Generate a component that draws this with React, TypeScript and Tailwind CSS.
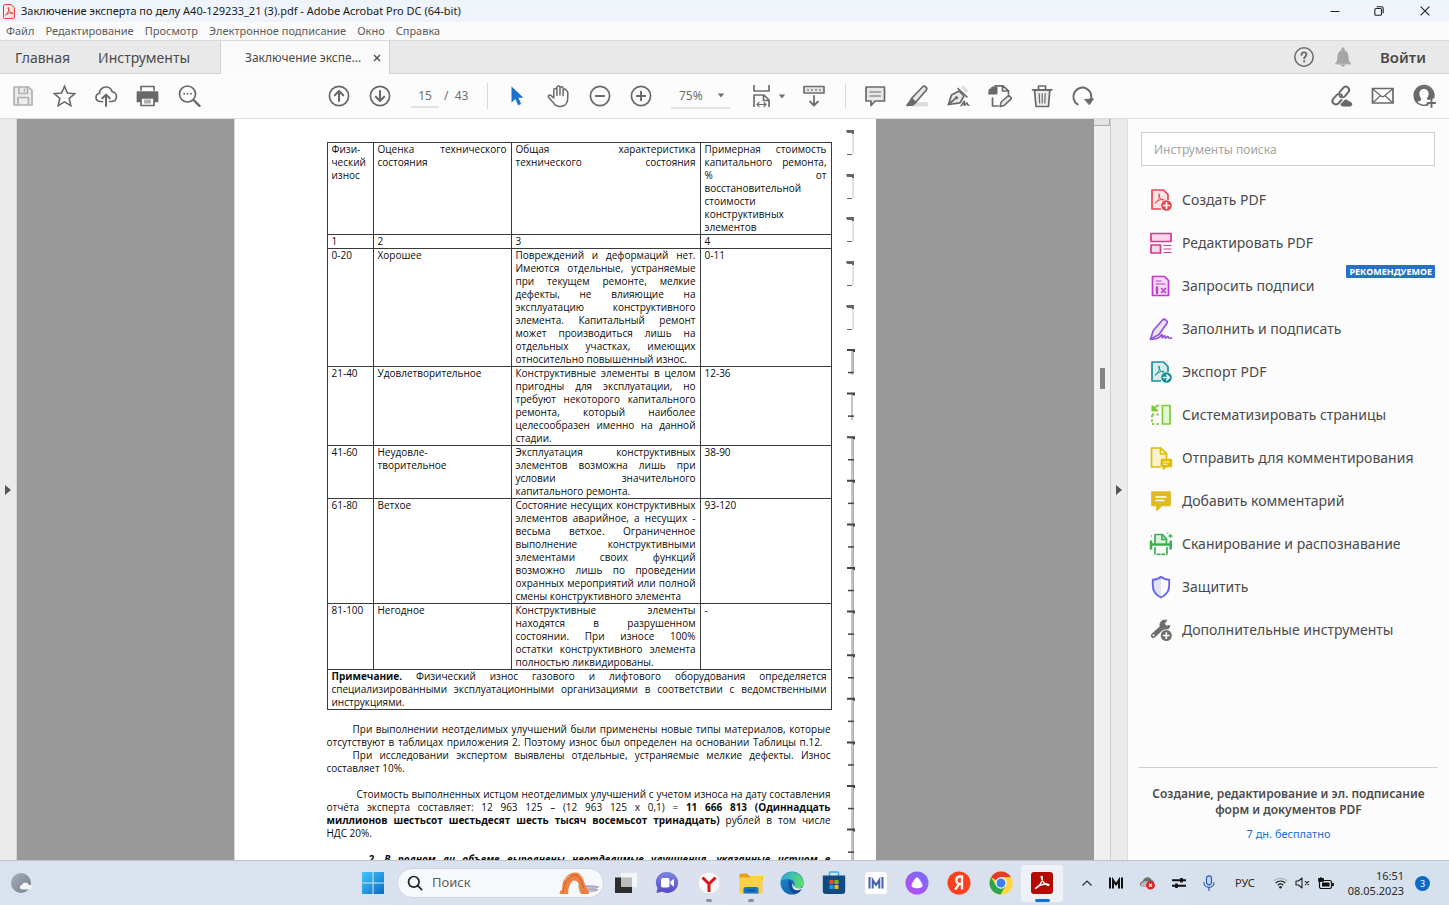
import React from "react";

type Kids = { children: React.ReactNode };

/* ---------- shared helpers ---------- */

function Glyph({ children, size = "size-6" }: Kids & { size?: string }) {
  return (
    <svg
      viewBox="0 0 24 24"
      className={size + " shrink-0"}
      fill="none"
      stroke="currentColor"
      strokeWidth="1.7"
      strokeLinecap="round"
      strokeLinejoin="round"
      aria-hidden="true"
    >
      {children}
    </svg>
  );
}

function Tool({ label, children }: Kids & { label: string }) {
  return (
    <button type="button" aria-label={label} className="flex h-9 flex-1 items-center justify-center text-[#696969]">
      {children}
    </button>
  );
}

function Caret() {
  return (
    <svg viewBox="0 0 8 5" className="h-[5px] w-2 shrink-0" fill="#6e6e6e" aria-hidden="true">
      <path d="M0.8 0.5h6.4L4 4.6z" />
    </svg>
  );
}

/* ---------- window header ---------- */

function TitleBar() {
  return (
    <header className="flex h-[22px] shrink-0 items-center bg-[#eff3fa] pl-[3px] text-[#1b1b1b]">
      <svg viewBox="0 0 12 15" className="h-[15px] w-3" fill="none" aria-hidden="true">
        <path d="M1.5.6h6.8L11.4 3.6v9.8a1 1 0 0 1-1 1H1.5a1 1 0 0 1-1-1V1.6a1 1 0 0 1 1-1z" fill="#fde7e7" stroke="#e5322d" />
        <path d="M2.5 11.2C4.5 9.8 6 6.8 5.8 4.2c-.1-1-.8-.8-.6.2.4 2.5 2.2 4.8 4.4 5.2.7 0 .5-.9-.4-.9-2.2 0-5.2.9-6.7 2.5z" stroke="#e5322d" strokeWidth=".9" />
      </svg>
      <h1 className="ml-[6px] text-[11px] leading-4">Заключение эксперта по делу А40-129233_21 (3).pdf - Adobe Acrobat Pro DC (64-bit)</h1>
      <div className="ml-auto flex h-full">
        <button type="button" aria-label="Свернуть" className="flex w-11 items-center justify-center">
          <svg viewBox="0 0 10 10" className="size-[10px]" stroke="#222" aria-hidden="true"><path d="M.5 5.5h9" /></svg>
        </button>
        <button type="button" aria-label="Восстановить" className="flex w-11 items-center justify-center">
          <svg viewBox="0 0 10 10" className="size-[10px]" fill="none" stroke="#222" strokeWidth="1.1" aria-hidden="true">
            <rect x=".8" y="2.5" width="6.7" height="6.7" rx="1.3" />
            <path d="M2.7 .8h4.8a1.7 1.7 0 0 1 1.7 1.7v4.8" />
          </svg>
        </button>
        <button type="button" aria-label="Закрыть" className="flex w-12 items-center justify-center">
          <svg viewBox="0 0 10 10" className="size-[10px]" stroke="#222" strokeWidth="1.1" aria-hidden="true"><path d="M.6.6l8.8 8.8M9.4.6L.6 9.4" /></svg>
        </button>
      </div>
    </header>
  );
}

const MENUS = ["Файл", "Редактирование", "Просмотр", "Электронное подписание", "Окно", "Справка"];

function MenuBar() {
  return (
    <nav className="flex h-[19px] shrink-0 items-center gap-[11px] border-b border-[#d9d9d9] bg-[#fafafa] pl-[6px] text-[11px] leading-4 text-[#5c5c5c]">
      {MENUS.map((m) => (
        <button type="button" key={m}>{m}</button>
      ))}
    </nav>
  );
}

function TabBar() {
  return (
    <div className="flex h-[33px] shrink-0 bg-[#e9e9e9] text-[#4b4b4b]">
      <div className="flex w-[221px] items-center gap-7 border-r border-b border-[#d2d2d2] pl-[15px] text-[14px]">
        <button type="button">Главная</button>
        <button type="button">Инструменты</button>
      </div>
      <div className="flex w-[169px] items-center border-r border-[#d2d2d2] bg-[#fafafa] pl-6 text-[12px]">
        <button type="button">Заключение экспе...</button>
        <button type="button" aria-label="Закрыть вкладку" className="ml-auto mr-[8px]">
          <svg viewBox="0 0 8 8" className="size-2" stroke="#555" strokeWidth="1.5" aria-hidden="true"><path d="M1 1l6 6M7 1L1 7" /></svg>
        </button>
      </div>
      <div className="flex flex-1 items-center justify-end border-b border-[#d2d2d2] pr-[23px] text-[#6e6e6e]">
        <button type="button" aria-label="Справка">
          <Glyph size="size-[22px]">
            <circle cx="12" cy="12" r="10" />
            <path d="M9.3 9.7c0-1.8 1.2-2.7 2.7-2.7s2.7.9 2.7 2.4c0 2-2.5 2.1-2.5 4.1" strokeWidth="2" />
            <path d="M12.2 16.8v.1" strokeWidth="2.4" />
          </Glyph>
        </button>
        <button type="button" aria-label="Уведомления" className="ml-[17px] text-[#a6a6a6]">
          <Glyph size="size-[22px]">
            <path d="M3.8 19.3c1.8-1.7 2.7-4 2.7-8 0-3.5 1.9-5.8 4.2-6.3V3.2c0-1.600 2.600-1.600 2.600 0V5c2.300.5 4.200 2.800 4.200 6.300 0 4 .9 6.300 2.700 8z" fill="currentColor" strokeWidth="1" />
            <path d="M10 20.800h4c-.3 1.600-3.700 1.600-4 0z" fill="currentColor" strokeWidth="1" />
          </Glyph>
        </button>
        <button type="button" className="ml-[26px] text-[15px] font-semibold text-[#4b4b4b]">Войти</button>
      </div>
    </div>
  );
}

/* ---------- toolbar ---------- */

function Toolbar() {
  return (
    <div className="flex h-[45px] shrink-0 items-center border-b border-[#dcdcdc] bg-[#fcfcfc] pr-1 pl-[2px] text-[#6e6e6e]">
      <div className="flex w-[208px]">
        <Tool label="Сохранить">
          <span className="text-[#b1b1b1]">
            <Glyph>
              <path d="M3 3h14.5L21 6.500V21H3z" fill="#ececec" />
              <path d="M8 3v6.500h8.500V3M7 21v-7.500h10.500V21M13.500 5v2" />
            </Glyph>
          </span>
        </Tool>
        <Tool label="Избранное">
          <Glyph>
            <path d="M12.500 2.300l2.900 6.700 7.300.7-5.500 4.800 1.600 7.200-6.300-3.800-6.300 3.800 1.600-7.200-5.500-4.800 7.300-.7z" strokeLinejoin="miter" strokeWidth="1.600" />
          </Glyph>
        </Tool>
        <Tool label="Отправить в облако">
          <Glyph>
            <path d="M8.500 17.500H6.300C3.700 17.500 2 15.700 2 13.500c0-2.100 1.400-3.700 3.400-4C5.500 5.700 8.300 3 11.800 3c3.100 0 5.700 2 6.400 4.900 2.300.2 4.300 2.200 4.300 4.700 0 2.800-2 4.900-4.700 4.900h-2.300" />
            <path d="M12 22V11M8.300 14.300L12 10.600l3.700 3.700" strokeWidth="2" />
          </Glyph>
        </Tool>
        <Tool label="Печать">
          <Glyph>
            <path d="M5 6V2.500h13V6" />
            <path d="M1.500 8h20v9.500H18V14H5v3.500H1.500z" fill="currentColor" />
            <path d="M5 14h13v7.500H5z" fill="#fcfcfc" />
            <path d="M8 15.500h7v4H8z" fill="#b0b0b0" stroke="none" />
          </Glyph>
        </Tool>
        <Tool label="Найти">
          <Glyph>
            <circle cx="10.500" cy="10" r="8" />
            <path d="M16.500 16l6 5.800" strokeWidth="2.400" />
            <path d="M7.200 9.700v.1M10.600 9.700v.1M14 9.700v.1" strokeWidth="1.900" />
          </Glyph>
        </Tool>
      </div>
      <div className="min-w-2 flex-1" />
      <div className="flex w-[786px] items-center">
        <div className="flex w-[83px]">
          <Tool label="Предыдущая страница">
            <Glyph>
              <circle cx="12" cy="12" r="9.600" />
              <path d="M12 17V7.500M7.800 11.300L12 7.100l4.200 4.200" strokeWidth="2.100" />
            </Glyph>
          </Tool>
          <Tool label="Следующая страница">
            <Glyph>
              <circle cx="12" cy="12" r="9.600" />
              <path d="M12 7v9.500M7.800 12.700l4.200 4.200 4.200-4.200" strokeWidth="2.100" />
            </Glyph>
          </Tool>
        </div>
        <input
          aria-label="Номер страницы"
          defaultValue="15"
          className="ml-[10px] h-6 w-[28px] border-b-2 border-[#e3e3e3] bg-transparent text-center text-[12px]"
        />
        <span className="ml-[5px] w-[43px] text-[12px] whitespace-pre">/  43</span>
        <span className="h-[26px] w-px bg-[#d9d9d9]" />
        <div className="ml-2 flex w-[166px]">
          <Tool label="Выделение">
            <svg viewBox="0 0 14 20" className="h-5 w-[14px]" fill="#1e70cd" aria-hidden="true">
              <path d="M1.500 .5v16l3.900-3.500 2.700 6.300 3-1.300-2.700-6.200h5.100z" />
            </svg>
          </Tool>
          <Tool label="Рука">
            <Glyph>
              <path
                d="M7.800 14V6a1.500 1.500 0 0 1 3.100 0v5.500M10.900 6V3.500a1.500 1.500 0 0 1 3.100 0V11M14 4.200a1.500 1.500 0 0 1 3.100 0v7.300M17.100 6.500a1.500 1.500 0 0 1 3.100 0c.9.2 1.600.9 1.600 2v5.500c0 5-3 8.500-7.800 8.500-3.500 0-5.300-1.300-7-4.300l-4.300-4.600c-1.400-1.800.8-3.300 2.400-2l2.700 2.400"
                strokeWidth="1.500"
              />
            </Glyph>
          </Tool>
          <Tool label="Уменьшить">
            <Glyph><circle cx="12" cy="12" r="9.600" /><path d="M7.800 12h8.400" strokeWidth="2" /></Glyph>
          </Tool>
          <Tool label="Увеличить">
            <Glyph><circle cx="12" cy="12" r="9.600" /><path d="M7.800 12h8.400M12 7.800v8.400" strokeWidth="2" /></Glyph>
          </Tool>
        </div>
        <div className="ml-[9px] flex h-[25px] w-[59px] items-center border-b-2 border-[#e3e3e3] pt-px pr-[5px] pl-2">
          <select aria-label="Масштаб" defaultValue="75%" className="min-w-0 flex-1 appearance-none bg-transparent text-[12px]">
            <option>75%</option>
            <option>100%</option>
          </select>
          <Caret />
        </div>
        <div className="ml-[18px] flex w-[34px] items-center gap-1">
          <button type="button" aria-label="По ширине" className="flex w-[26px] shrink-0 justify-center">
            <Glyph>
              <path d="M5 1v6h15V1M5 23V11h10l5 5v7M14.500 11v5.500h5" strokeLinecap="butt" />
              <path d="M8.500 20.500h8M10 18.500l-2 2 2 2M15 18.500l2 2-2 2" strokeWidth="1.200" />
            </Glyph>
          </button>
          <Caret />
        </div>
        <button type="button" aria-label="Прокрутка" className="ml-[20px] flex w-6 justify-center">
          <Glyph>
            <path d="M2 2.500h20V9H2z" fill="#e6e6e6" />
            <path d="M6 5.800v.1M10 5.800v.1M14 5.800v.1M18 5.800v.1" strokeWidth="1.700" />
            <path d="M12 12v9M8 17.500l4 4 4-4" strokeWidth="1.800" />
          </Glyph>
        </button>
        <span className="ml-[19px] h-[26px] w-px bg-[#d9d9d9]" />
        <div className="ml-2 flex flex-1">
          <Tool label="Комментарий">
            <Glyph>
              <path d="M3 3h18.500v14H12l-4 4.500V17H3z" fill="#e8e8e8" />
              <path d="M7 8h10.500M7 12h10.500" strokeWidth="1.200" />
            </Glyph>
          </Tool>
          <Tool label="Маркер">
            <Glyph>
              <path d="M12 18h11v4.500H7z" fill="#dddddd" stroke="none" />
              <path d="M6.500 14.500l11-11.500c2-2 5.500.8 3.700 3.200L10.500 18.500z" fill="#e8e8e8" />
              <path d="M6.500 15l4 3.600-2.500 2.200L2 21.500z" fill="currentColor" />
            </Glyph>
          </Tool>
          <Tool label="Подпись">
            <Glyph>
              <path d="M14.500 3.500l3-2 5 5-2.500 2.800z" fill="#dddddd" stroke="none" />
              <path d="M2.500 20.500L5.500 11l7.500-4 5 5-4 6.800z" fill="#e8e8e8" />
              <path d="M2.500 20.500l6.800-5.800M12 4.500l9 8.500" />
              <circle cx="10.500" cy="13.700" r="1.200" fill="currentColor" strokeWidth="1" />
              <path d="M15 21.800c1.500-1.500 2.500-5 3.500-4.500s-1.500 4 0 4 1.500-2.500 2.400-2.300-.2 2.300 1.900 2.300" strokeWidth="1.500" />
            </Glyph>
          </Tool>
          <Tool label="Заполнить">
            <Glyph>
              <path d="M1 6.500C1 5 1.500 5 3 5l1-2h5v7H1z" fill="currentColor" strokeWidth="1" />
              <path d="M7 1.800h8l5.500 5v3M14.500 2v5h5.500M4.500 14v8H10" />
              <path d="M12 22.500l1.200-4.500 7.500-6.800 3 3.200-7.500 7z" fill="#e8e8e8" strokeWidth="1.500" />
            </Glyph>
          </Tool>
          <Tool label="Удалить">
            <Glyph>
              <path d="M4.500 6h15.300l-1.300 16.500H6z" fill="#ececec" />
              <path d="M2.500 5.800h19.300M8.500 5.500V2h7v3.500" />
              <path d="M9.200 9.500l.4 9.500M12.200 9.500V19M15.200 9.500l-.4 9.500" strokeWidth="1.200" />
            </Glyph>
          </Tool>
          <Tool label="Повернуть">
            <Glyph>
              <path d="M6.700 20.300A9 9 0 1 1 19.500 16.500" strokeWidth="2" />
              <path d="M14 15.500l8.500-.7-4 5.700z" fill="currentColor" strokeWidth="1" />
            </Glyph>
          </Tool>
        </div>
      </div>
      <div className="min-w-2 flex-[2]" />
      <div className="flex w-[125px]">
        <Tool label="Ссылка">
          <Glyph>
            <g strokeWidth="2">
              <path d="M10.500 8.200l4-4.600c2.800-2.800 7.300 1 5 4.200l-3.500 4.300c-1.500 1.700-4 1.500-5.300 0" />
              <path d="M12.500 16l-3 3.200c-3.300 3-8-.8-5.300-4.300l3.600-4c1.800-1.600 4.200-1 5.200.6" />
            </g>
            <path d="M13.500 22c-2.400-.3-2-3.300.5-3.200.3-3.300 4.800-3.700 5.600-.9 3.200-.6 4.600 3.700 1.800 4.100z" fill="currentColor" strokeWidth="1" />
          </Glyph>
        </Tool>
        <Tool label="Почта">
          <Glyph>
            <path d="M1.500 4.500H22v14.500H1.500z" strokeLinejoin="miter" />
            <path d="M1.500 4.800l8.500 7.200c1 .9 2.300.9 3.300 0l8.500-7.200M2 18.700l7-6.700M21.500 18.700l-7-6.700" strokeWidth="1.200" />
          </Glyph>
        </Tool>
        <Tool label="Поделиться">
          <Glyph>
            <path d="M16 20.500A9.900 9.900 0 1 1 21.600 14" strokeWidth="1.400" />
            <path d="M12 2a10 10 0 0 0-7.500 16.500c1.700-1.300 3.700-1.600 4.500-2.300.4-.5.200-1.700-.2-2.200C6.500 11.500 6.500 5 12 5s5.500 6.500 3.200 9c-.4.500-.5 1.300-.1 1.600l2 .4 4.700-2A10 10 0 0 0 12 2z" fill="currentColor" stroke="none" />
            <path d="M19.500 15v8M15.500 19h8" strokeWidth="1.900" />
          </Glyph>
        </Tool>
      </div>
    </div>
  );
}

/* ---------- scanned document ---------- */

/* One typeset line stretched to the full measure. */
function J({ children, indent = "" }: Kids & { indent?: string }) {
  return <span className={"block text-justify whitespace-nowrap [text-align-last:justify] " + indent}>{children}</span>;
}

/* One typeset line left at its natural width. */
function N({ children }: Kids) {
  return <span className="block whitespace-nowrap">{children}</span>;
}

type Row = { wear: string; state: string[]; text: string[]; cost: string };

const ROWS: Row[] = [
  {
    wear: "0-20",
    state: ["Хорошее"],
    cost: "0-11",
    text: [
      "Повреждений и деформаций нет.",
      "Имеются отдельные, устраняемые",
      "при текущем ремонте, мелкие",
      "дефекты, не влияющие на",
      "эксплуатацию конструктивного",
      "элемента. Капитальный ремонт",
      "может производиться лишь на",
      "отдельных участках, имеющих",
      "относительно повышенный износ.",
    ],
  },
  {
    wear: "21-40",
    state: ["Удовлетворительное"],
    cost: "12-36",
    text: [
      "Конструктивные элементы в целом",
      "пригодны для эксплуатации, но",
      "требуют некоторого капитального",
      "ремонта, который наиболее",
      "целесообразен именно на данной",
      "стадии.",
    ],
  },
  {
    wear: "41-60",
    state: ["Неудовле-", "творительное"],
    cost: "38-90",
    text: ["Эксплуатация конструктивных", "элементов возможна лишь при", "условии значительного", "капитального ремонта."],
  },
  {
    wear: "61-80",
    state: ["Ветхое"],
    cost: "93-120",
    text: [
      "Состояние несущих конструктивных",
      "элементов аварийное, а несущих -",
      "весьма ветхое. Ограниченное",
      "выполнение конструктивными",
      "элементами своих функций",
      "возможно лишь по проведении",
      "охранных мероприятий или полной",
      "смены конструктивного элемента",
    ],
  },
  {
    wear: "81-100",
    state: ["Негодное"],
    cost: "-",
    text: [
      "Конструктивные элементы",
      "находятся в разрушенном",
      "состоянии. При износе 100%",
      "остатки конструктивного элемента",
      "полностью ликвидированы.",
    ],
  },
];

const HOOKS = [11, 55, 98, 142, 186];
const TICKS = Array.from({ length: 24 }, (_, i) => 230 + i * 21.8);

function Binding() {
  return (
    <svg viewBox="0 0 14 742" className="absolute top-0 right-[19px] h-[742px] w-[14px]" fill="none" aria-hidden="true">
      {HOOKS.map((y) => (
        <g key={y}>
          <path d={`M3 ${y}h8v4h-2v-1h-5z`} fill="#666" />
          <path d={`M10 ${y + 4}v20`} stroke="#c2c2c2" />
          <path d={`M4 ${y + 24.5}h5`} stroke="#666" />
        </g>
      ))}
      <path d="M9 232v24M9 275v26M9 318v424" stroke="#c4c4c4" strokeWidth="2" />
      <path d="M10.5 232v22M10.5 318v424" stroke="#8a8a8a" strokeWidth=".7" />
      {TICKS.map((y, i) => (
        <path key={y} d={i % 2 === 0 ? `M4 ${y}h8v3h-2v-1h-6z` : `M5 ${y + 1}h6v1.5h-6z`} fill="#444" />
      ))}
    </svg>
  );
}

const CELL = "border border-[#3a3a3a] px-1 py-0 text-left align-top font-normal";

function DocumentPage() {
  return (
    <article className="relative h-full w-[642px] shrink-0 overflow-hidden border-l border-[#d8d8d8] bg-white pt-[23px] pl-[92px] font-['Open_Sans','Noto_Sans',sans-serif] text-[10px] leading-[13px] text-[#0c0c0c]">
      <table className="w-[504px] table-fixed border-collapse">
        <colgroup>
          <col className="w-[46px]" />
          <col className="w-[138px]" />
          <col className="w-[189px]" />
          <col className="w-[131px]" />
        </colgroup>
        <thead>
          <tr>
            <th className={CELL}><N>Физи-</N><N>ческий</N><N>износ</N></th>
            <th className={CELL}><J>Оценка технического</J><N>состояния</N></th>
            <th className={CELL}><J>Общая характеристика</J><J>технического состояния</J></th>
            <th className={CELL}>
              <J>Примерная стоимость</J>
              <J>капитального ремонта,</J>
              <J>% от</J>
              <N>восстановительной</N>
              <N>стоимости</N>
              <N>конструктивных</N>
              <N>элементов</N>
            </th>
          </tr>
        </thead>
        <tbody>
          <tr>
            <td className={CELL}>1</td>
            <td className={CELL}>2</td>
            <td className={CELL}>3</td>
            <td className={CELL}>4</td>
          </tr>
          {ROWS.map((r) => (
            <tr key={r.wear}>
              <td className={CELL}>{r.wear}</td>
              <td className={CELL}>{r.state.map((s) => <N key={s}>{s}</N>)}</td>
              <td className={CELL}>
                {r.text.map((t, i) => (i === r.text.length - 1 ? <N key={t}>{t}</N> : <J key={t}>{t}</J>))}
              </td>
              <td className={CELL}>{r.cost}</td>
            </tr>
          ))}
          <tr>
            <td colSpan={4} className={CELL}>
              <J><b>Примечание.</b> Физический износ газового и лифтового оборудования определяется</J>
              <J>специализированными эксплуатационными организациями в соответствии с ведомственными</J>
              <N>инструкциями.</N>
            </td>
          </tr>
        </tbody>
      </table>
      <div className="w-[504px] pt-[13px]">
        <p>
          <J indent="pl-[26px]">При выполнении неотделимых улучшений были применены новые типы материалов, которые</J>
          <J indent="pr-[8px]">отсутствуют в таблицах приложения 2. Поэтому износ был определен на основании Таблицы п.12.</J>
        </p>
        <p>
          <J indent="pl-[26px]">При исследовании экспертом выявлены отдельные, устраняемые мелкие дефекты. Износ</J>
          <N>составляет 10%.</N>
        </p>
        <p className="pt-[13px]">
          <J indent="pl-[30px]">Стоимость выполненных истцом неотделимых улучшений с учетом износа на дату составления</J>
          <J>отчёта эксперта составляет: 12 963 125 – (12 963 125 х 0,1) = <b>11 666 813 (Одиннадцать</b></J>
          <J><b>миллионов шестьсот шестьдесят шесть тысяч восемьсот тринадцать)</b> рублей в том числе</J>
          <N>НДС 20%.</N>
        </p>
        <p className="pt-[13px] font-bold italic">
          <J indent="pl-[42px]">2. В полном ли объеме выполнены неотделимые улучшения, указанные истцом в</J>
        </p>
      </div>
      <Binding />
    </article>
  );
}

/* ---------- tools pane ---------- */

function PdfSheet({ tint, children }: Kids & { tint: string }) {
  return (
    <>
      <path d="M12 21H3V2h11.5L19 6.500V12" fill={tint} strokeLinecap="butt" />
      <path d="M6.500 15c2.500-1.500 4.500-5.500 4-8.500-.2-.8-1-.5-.8.300.6 2.700 2.300 5 4.800 5.500.9 0 .7-1-.2-1-2.800-.1-6.500 1.400-7.800 3.700z" strokeWidth="1" />
      <circle cx="17.500" cy="17.500" r="5.300" fill="currentColor" stroke="none" />
      {children}
    </>
  );
}

const TOOLS: { label: string; color: string; icon: React.ReactNode }[] = [
  {
    label: "Создать PDF",
    color: "text-[#e34850]",
    icon: <PdfSheet tint="#fbe3e4"><path d="M17.500 14.800v5.400M14.800 17.500h5.400" stroke="#fff" /></PdfSheet>,
  },
  {
    label: "Редактировать PDF",
    color: "text-[#d83790]",
    icon: (
      <>
        <path d="M2 2.500h20v8H2zM2 14h9.500v8H2z" fill="#f6d9e8" />
        <path d="M15 14.500h7M15 18h7M15 21.500h7" strokeWidth="1.200" />
      </>
    ),
  },
  {
    label: "Запросить подписи",
    color: "text-[#c038cc]",
    icon: (
      <>
        <path d="M3.500 2.500h12l4 4V21.500h-16z" fill="#f5def7" />
        <path d="M7 7h5M7 10h9" strokeWidth="1.200" />
        <path d="M8 13.500v3.500M8 19v.1" strokeWidth="2.400" />
        <path d="M12.500 14.500l4 4M16.500 14.500l-4 4" strokeWidth="1.700" />
      </>
    ),
  },
  {
    label: "Заполнить и подписать",
    color: "text-[#9256d9]",
    icon: (
      <>
        <path d="M1.500 22.200L4.300 13.500 13.500 3c1.900-2 6 1 4.300 3.600L10 17.500z" fill="#ece0f8" />
        <path d="M1.500 22.200c5 .3 8.500-.7 10.500-3.700.9-1.300 1.700-1 1.200.4-.4 1.400 0 2.300 1 1.200.9-1.200 2-1.800 1.900-.3-.1 1.700 1 1.500 1.700.5.7-.9 1.500-.8 1.700.2.1.9 1.500.9 3 .5" />
      </>
    ),
  },
  {
    label: "Экспорт PDF",
    color: "text-[#1b9197]",
    icon: (
      <PdfSheet tint="#d6eced">
        <path d="M14.500 17.500h5.500M17.800 15l2.500 2.500-2.500 2.500" stroke="#fff" strokeWidth="1.500" />
      </PdfSheet>
    ),
  },
  {
    label: "Систематизировать страницы",
    color: "text-[#7dcc36]",
    icon: (
      <>
        <path d="M13.500 2.500H21v18.500h-7.500z" fill="#e6f6d8" />
        <path d="M3 12v9h8.500M3 11.500h7" strokeDasharray="2.200 2.300" strokeLinecap="butt" strokeWidth="2" />
        <path d="M9.500 2.300c-2 .3-4 2-5.500 4.200M3.300 3v4.700h5z" fill="currentColor" />
      </>
    ),
  },
  {
    label: "Отправить для комментирования",
    color: "text-[#dfbf00]",
    icon: (
      <>
        <path d="M11 21H2.500V2h9.300l5.700 5.700V12" fill="#f9f2cc" />
        <path d="M11.500 2v6h6z" fill="#fff" />
        <path d="M12.500 13.500h9.800v7H17l-2.500 2.300v-2.300h-2z" fill="currentColor" />
        <path d="M14.500 16h5.500M14.500 18.300h3.500" stroke="#fff8d0" strokeWidth="1" />
      </>
    ),
  },
  {
    label: "Добавить комментарий",
    color: "text-[#dfba22]",
    icon: (
      <>
        <path d="M3 3h18v13.500h-8.500L8 21v-4.500H3z" fill="currentColor" />
        <path d="M7 8h10M7 11.500h8" stroke="#fff" strokeWidth="1.500" />
      </>
    ),
  },
  {
    label: "Сканирование и распознавание",
    color: "text-[#3dae50]",
    icon: (
      <>
        <path d="M6 11V2.500h7.500L17.500 7v4" fill="#d8efdc" />
        <path d="M13 3v4.500h4" />
        <path d="M2 8.500v9M21.700 8.500v9M2 12.500h20" strokeWidth="2.500" strokeLinecap="butt" />
        <path d="M6 15.500v6.500M18 15.500v6.500M8.500 22.300h2.500M13 22.300h2.500" />
        <path d="M18.800 1v.1M21.500 2.500v3M20 4h3M2.500 4v.1" strokeWidth="1.300" />
      </>
    ),
  },
  {
    label: "Защитить",
    color: "text-[#6767ec]",
    icon: (
      <>
        <path d="M12 2v20.500c-5.500-3-8-6.500-8-12V5c3.500 0 6-1 8-3z" fill="#e1e1fb" stroke="none" />
        <path d="M12 1.800c2 1.800 4.500 2.900 8.200 2.900v5.800c0 5.700-2.700 9.300-8.200 12-5.500-2.700-8.200-6.300-8.200-12V4.700C7.500 4.700 10 3.600 12 1.800z" strokeWidth="1.900" />
      </>
    ),
  },
  {
    label: "Дополнительные инструменты",
    color: "text-[#6e6e6e]",
    icon: (
      <>
        <path d="M4.300 17.500l9.500-8.500" strokeWidth="5" />
        <path d="M17.500 2.200a5 5 0 1 0 3.400 5.300l-3.200.6-2.200-2z" fill="currentColor" strokeWidth="1" />
        <circle cx="4.500" cy="17.300" r="1" fill="#fff" stroke="none" />
        <circle cx="17.300" cy="17.500" r="6.300" fill="#fcfcfc" stroke="none" />
        <circle cx="17.300" cy="17.500" r="5.500" fill="currentColor" stroke="none" />
        <path d="M17.300 14.800v5.400M14.600 17.500H20" stroke="#fff" />
      </>
    ),
  },
];

function ToolsPane() {
  return (
    <aside className="flex w-[322px] shrink-0 flex-col border-l border-[#dcdcdc] bg-[#fcfcfc] pt-[13px]">
      <input
        type="search"
        aria-label="Инструменты поиска"
        placeholder="Инструменты поиска"
        className="mr-[14px] ml-[13px] h-[34px] shrink-0 border border-[#cfcfcf] bg-white px-3 text-[12px] placeholder:text-[#a3a3a3]"
      />
      <ul className="pt-3 pl-[21px]">
        {TOOLS.map((t) => (
          <li key={t.label} className="relative">
            <button type="button" className="flex h-[43px] items-center gap-[9px] text-[14px] whitespace-nowrap text-[#4b4b4b]">
              <span className={t.color}><Glyph>{t.icon}</Glyph></span>
              {t.label}
            </button>
            {t.label === "Запросить подписи" && (
              <span className="absolute top-px right-[14px] h-[13px] rounded-[1px] bg-[#2670c8] px-[3px] text-[9px] leading-[13px] font-bold text-white">
                РЕКОМЕНДУЕМОЕ
              </span>
            )}
          </li>
        ))}
      </ul>
      <div className="mx-[11px] mt-auto border-t border-[#cfcfcf] pt-[18px] pb-[18px] text-center">
        <p className="text-[12px] leading-4 font-semibold text-[#4b4b4b]">
          Создание, редактирование и эл. подписание
          <br />
          форм и документов PDF
        </p>
        <a href="#trial" className="mt-2 block text-[11px] leading-4 text-[#1a6fd0]">7 дн. бесплатно</a>
      </div>
    </aside>
  );
}

function Workspace() {
  return (
    <main className="flex min-h-0 flex-1">
      <button type="button" aria-label="Показать панель навигации" className="flex w-[17px] shrink-0 items-center justify-center border-r border-[#d4d4d4] bg-[#ebebeb]">
        <svg viewBox="0 0 6 10" className="h-[10px] w-[6px]" fill="#555" aria-hidden="true"><path d="M0 0l6 5-6 5z" /></svg>
      </button>
      <section className="flex min-w-0 flex-1 justify-center overflow-hidden bg-[#999999] pr-[2px]">
        <DocumentPage />
      </section>
      <div className="flex w-4 shrink-0 flex-col items-center bg-[#f0f0f0]">
        <span className="h-[7px] w-full border-r border-b border-[#adadad] bg-[#e3e3e3]" />
        <span className="mt-[242px] h-[21px] w-[5px] bg-[#848484]" />
      </div>
      <button type="button" aria-label="Скрыть панель инструментов" className="flex w-[17px] shrink-0 items-center justify-center border-l border-[#cfcfcf] bg-[#ebebeb]">
        <svg viewBox="0 0 6 10" className="h-[10px] w-[6px]" fill="#555" aria-hidden="true"><path d="M0 0l6 5-6 5z" /></svg>
      </button>
      <ToolsPane />
    </main>
  );
}

/* ---------- taskbar ---------- */

function TaskApp({ label, children, state }: Kids & { label: string; state?: "open" | "active" }) {
  return (
    <button
      type="button"
      aria-label={label}
      className={"relative flex h-[37px] flex-1 items-center justify-center " + (state === "active" ? "rounded bg-[#eef2f8]" : "")}
    >
      <svg viewBox="0 0 24 24" className="size-6" fill="none" aria-hidden="true">{children}</svg>
      {state === "open" && <span className="absolute bottom-0 h-[3px] w-[6px] rounded-full bg-[#8a8f97]" />}
      {state === "active" && <span className="absolute bottom-0 h-[3px] w-[15px] rounded-full bg-[#0f73d6]" />}
    </button>
  );
}

function Taskbar() {
  return (
    <footer className="grid h-[45px] shrink-0 grid-cols-[353fr_710px_386fr] items-center border-t border-[#bcc5d2] bg-linear-to-r from-[#dae2f0] via-[#dbe1ee] to-[#d5e1ec] text-[#2b2b2b]">
      <button type="button" aria-label="Погода" className="ml-[10px] w-6">
        <svg viewBox="0 0 24 24" className="size-6" aria-hidden="true">
          <defs><linearGradient id="moon" x1="0" y1="0" x2="1" y2="1"><stop offset="0" stopColor="#a5b0ba" /><stop offset="1" stopColor="#747e88" /></linearGradient></defs>
          <circle cx="11" cy="12" r="10" fill="url(#moon)" />
          <path d="M12.500 18.500c-3.500 0-3.500-4.500-.5-4.500.8-3.300 5.800-3.300 6.500-.3 4.500-.4 4.500 4.800 1 4.800z" fill="#f3f5f7" />
        </svg>
      </button>
      <div className="flex items-center">
        <button type="button" aria-label="Пуск" className="flex w-10 justify-center">
          <svg viewBox="0 0 24 24" className="size-6" aria-hidden="true">
            <defs><linearGradient id="win" x1="0" y1="0" x2="1" y2="1"><stop offset="0" stopColor="#42c8fa" /><stop offset="1" stopColor="#0a6cc4" /></linearGradient></defs>
            <path d="M1 1h10.500v10.500H1zM12.500 1H23v10.500H12.500zM1 12.500h10.500V23H1zM12.500 12.500H23V23H12.500z" fill="url(#win)" />
          </svg>
        </button>
        <label className="ml-1 flex h-[30px] w-[207px] items-center rounded-full border border-[#ced5e0] bg-[#f6f9fc] pr-[2px] pl-[9px]">
          <svg viewBox="0 0 16 16" className="size-4 shrink-0" fill="none" stroke="#222" strokeWidth="1.700" aria-hidden="true">
            <circle cx="6.800" cy="6.800" r="5.300" /><path d="M10.700 10.700l4 4" strokeLinecap="round" />
          </svg>
          <input aria-label="Поиск" placeholder="Поиск" className="ml-[9px] min-w-0 flex-1 bg-transparent text-[13px] placeholder:text-[#5d5d5d]" />
          <svg viewBox="0 0 42 24" className="h-6 w-[42px] shrink-0" aria-hidden="true">
            <path d="M19 14l17 .5 5 1.500-4 1.500 3 1.500-5 2-14 1z" fill="#a9a8c8" />
            <path d="M22 17h15M22 20h14" stroke="#e7c9c4" />
            <path d="M.5 23l.5-3 2-1 .5-6C5.500 6 10 1.500 16.500 1.500c4.500 0 7.500 4 9 10.500l2 5 2 3 .5 3h-8l-1-4c-1-6-2-9.500-5.500-9.500-3 0-4.500 3.500-6 8.500L9 23z" fill="#ee8142" />
            <path d="M4 21c1-9 5-16 11.500-17 5 0 7 6 9 13" stroke="#d2612f" strokeWidth="1.100" fill="none" />
            <path d="M6 9l5-5M20 3l3.500 5" stroke="#f7a76c" strokeWidth="1.300" />
          </svg>
        </label>
        <div className="ml-[1px] flex flex-1">
          <TaskApp label="Представление задач">
            <path d="M1 6.500h17v15.500H1z" fill="#2d2d2d" />
            <path d="M7 2h16v14H7z" fill="#f6f6f6" fillOpacity=".92" />
            <path d="M7 6.500h11V16H7z" fill="#bcbcbc" />
          </TaskApp>
          <TaskApp label="Чат">
            <defs><linearGradient id="chat" x1="0" y1="0" x2="0" y2="1"><stop offset="0" stopColor="#7b86e2" /><stop offset="1" stopColor="#5a49c4" /></linearGradient></defs>
            <path d="M12 1a11 10.500 0 1 1-5 19.800L1.500 22l1-5A10.500 10.500 0 0 1 12 1z" fill="url(#chat)" />
            <rect x="6" y="7" width="8.500" height="9.500" rx="1.800" fill="#fff" />
            <path d="M15.500 10.500l3.500-2.700v8l-3.500-2.700z" fill="#fff" />
          </TaskApp>
          <TaskApp label="Яндекс Браузер" state="open">
            <circle cx="12" cy="12" r="11" fill="#fafafa" stroke="#dcdcdc" />
            <path d="M5.500 6.500L12 13l6.500-6.500M12 13v8" stroke="#d8141c" strokeWidth="3" />
          </TaskApp>
          <TaskApp label="Проводник" state="open">
            <path d="M0.500 4a1.500 1.500 0 0 1 1.500-1.500h6l2.500 2.500H24v5H.5z" fill="#e2a21b" />
            <path d="M.5 6.500H10L12 5h11.500v17.500H.5z" fill="#fbcf47" />
            <path d="M4.500 22.500V18a2 2 0 0 1 2-2h11a2 2 0 0 1 2 2v4.500z" fill="#1674c5" />
            <path d="M8 19.500h8" stroke="#0b4f93" strokeWidth="1.300" />
          </TaskApp>
          <TaskApp label="Microsoft Edge">
            <defs>
              <linearGradient id="edgeTop" x1="0" y1="0" x2="1" y2=".3"><stop offset="0" stopColor="#2aa5de" /><stop offset="1" stopColor="#59dc72" /></linearGradient>
              <linearGradient id="edgeLow" x1="0" y1="0" x2="1" y2="1"><stop offset="0" stopColor="#1b8ed8" /><stop offset="1" stopColor="#10529e" /></linearGradient>
            </defs>
            <circle cx="12" cy="12" r="11.500" fill="url(#edgeLow)" />
            <path d="M.8 10A11.500 11.500 0 0 1 23.500 12c0 4-3 5.700-6 5.700-3 0-4.500-1-3.500-2.200 1.500-2 .5-7-5-7.500-4-.3-7 1-8.200 2z" fill="url(#edgeTop)" />
            <path d="M9.500 8.500C7 12 8.500 20 15 22.800c3-.8 5.500-2.500 7-5.300-6 3.500-12-1-9.500-5z" fill="#123f86" fillOpacity=".65" />
            <path d="M13.500 11.500c-1.500 2.500 1 6 5.500 6 2.500 0 4.500-1.200 5-3l-.7 2c-1.300 2-4.500 3.500-7.800 2.500-3-1-4.500-5-2-7.500z" fill="#e8eff8" />
          </TaskApp>
          <TaskApp label="Microsoft Store">
            <path d="M7.500 5.500V2a1 1 0 0 1 1-1h7a1 1 0 0 1 1 1v3.500" stroke="#35b2ee" strokeWidth="1.500" />
            <path d="M.8 4.500h22.400V20a3 3 0 0 1-3 3H3.800a3 3 0 0 1-3-3z" fill="#114a80" />
            <path d="M7.500 9H11.500v4h-4z" fill="#f25022" /><path d="M12.500 9h4v4h-4z" fill="#7fba00" />
            <path d="M7.500 14h4v4h-4z" fill="#00a4ef" /><path d="M12.500 14h4v4h-4z" fill="#ffb900" />
          </TaskApp>
          <TaskApp label="Mail">
            <rect x="1" y="1" width="22" height="22" rx="3" fill="#fdfdfe" />
            <path d="M5.500 6v11.500M18.500 6v11.500M8.700 17.500V9l3.300 5 3.300-5v8.500" stroke="#4661a8" strokeWidth="2" />
          </TaskApp>
          <TaskApp label="Алиса">
            <defs><linearGradient id="alice" x1="1" y1="0" x2="0" y2="1"><stop offset="0" stopColor="#6f6ff5" /><stop offset="1" stopColor="#c04bf2" /></linearGradient></defs>
            <circle cx="12" cy="12" r="11.500" fill="url(#alice)" />
            <path d="M12 6.200c1.700 0 5.500 6.500 5.500 8.300 0 3.600-11 3.600-11 0 0-1.800 3.800-8.300 5.500-8.300z" fill="#fff" />
          </TaskApp>
          <TaskApp label="Яндекс">
            <circle cx="12" cy="12" r="11.500" fill="#fc3f1d" />
            <path d="M15 18.500V5.500h-2.200c-4.600 0-4.600 7.300 0 7.300H15M12.200 12.800l-4 5.700" stroke="#fff" strokeWidth="2.300" />
          </TaskApp>
          <TaskApp label="Google Chrome">
            <circle cx="12" cy="12" r="11.500" fill="#fdd63c" />
            <path d="M12 12L2 6.300A11.500 11.500 0 0 1 22 6.300H12z" fill="#e33b2e" />
            <path d="M2 6.300A11.500 11.500 0 0 0 11.500 23.500L17 14.800 7.200 14.500z" fill="#2fa24c" />
            <path d="M12 6.300h10A11.500 11.500 0 0 1 11.500 23.500l5.500-8.700z" fill="#fdd63c" />
            <circle cx="12" cy="12" r="5.700" fill="#fff" /><circle cx="12" cy="12" r="4.500" fill="#3f7fec" />
          </TaskApp>
          <TaskApp label="Adobe Acrobat" state="active">
            <rect x="1" y="1" width="22" height="22" rx="3" fill="#b30b00" />
            <path d="M5.500 17.500c4-1.500 7.500-7.500 6.800-11.500-.3-1-1.300-.8-1.100.2.700 4 3.800 7.500 7 8.200 1 .1 1-1.200-.2-1.300-4.500-.3-10.500 1.500-12.500 4.400z" stroke="#fff" strokeWidth="1.400" strokeLinejoin="round" />
          </TaskApp>
        </div>
      </div>
      <div className="flex items-center justify-end pr-[19px]">
        <svg viewBox="0 0 10 6" className="h-[6px] w-[10px]" fill="none" stroke="currentColor" strokeWidth="1.200" aria-hidden="true"><path d="M.5 5.500L5 1l4.500 4.500" /></svg>
        <svg viewBox="0 0 14 12" className="ml-[17px] h-3 w-[14px]" fill="none" stroke="#111" strokeWidth="2" aria-hidden="true"><path d="M1 .5v11M13 .5v11M4 11.500V3l3 4.500L10 3v8.500" /></svg>
        <svg viewBox="0 0 17 14" className="ml-4 h-[14px] w-[17px]" aria-hidden="true">
          <path d="M3.500 10.500C0 10.500 0 6 3.500 5.500 5 0 11.500 0 12.500 4c2 .5 2.500 2 2.500 3l-7 3.500z" fill="#6e6e6e" />
          <path d="M3.500 10.800C1 10.500 1 7 3.800 6.500 6 4 9 5 10.500 6.500L8 10.800z" fill="#b9b9b9" />
          <circle cx="11.500" cy="9.300" r="4.300" fill="#e01b24" /><path d="M9.900 7.700l3.200 3.200M13.100 7.700l-3.200 3.200" stroke="#fff" strokeWidth="1.100" />
        </svg>
        <svg viewBox="0 0 14 12" className="ml-4 h-3 w-[14px]" fill="none" stroke="#111" strokeWidth="2" aria-hidden="true"><path d="M0 3.200h14M0 8.800h14" /><path d="M9.500 1v4.500M4.500 6.500V11" strokeWidth="2.600" /></svg>
        <svg viewBox="0 0 12 16" className="ml-[17px] h-4 w-3" fill="none" stroke="#2a5fa8" strokeWidth="1.200" strokeLinecap="round" aria-hidden="true"><rect x="3.500" y=".8" width="5" height="9" rx="2.500" fill="#c3d8f2" /><path d="M1 7.500c0 6.500 10 6.500 10 0M6 12.500v3" /></svg>
        <span className="ml-5 text-[11px]">РУС</span>
        <svg viewBox="0 0 15 12" className="ml-[18px] h-3 w-[15px]" fill="none" stroke="#222" strokeWidth="1.300" aria-hidden="true">
          <path d="M1 4c3.700-3.500 9.300-3.500 13 0" stroke="#a9b2bb" /><path d="M2.700 6c2.800-2.600 6.800-2.600 9.600 0M4.800 8.200c1.600-1.500 3.800-1.500 5.400 0" /><circle cx="7.500" cy="10.200" r="1.300" fill="#222" stroke="none" />
        </svg>
        <svg viewBox="0 0 15 12" className="ml-[7px] h-3 w-[15px]" fill="none" stroke="#222" strokeWidth="1.100" strokeLinejoin="round" aria-hidden="true"><path d="M1 4v4h2.500L7 11V1L3.500 4zM10 4.200l4 4M14 4.200l-4 4" /></svg>
        <svg viewBox="0 0 16 13" className="ml-2 h-[13px] w-4" fill="none" stroke="#111" strokeWidth="1.200" aria-hidden="true"><rect x="1.500" y="3.500" width="12" height="8" rx="1.800" /><rect x="4" y="5.500" width="7.500" height="4" fill="#111" stroke="none" /><path d="M15 6v3" strokeWidth="1.800" /><path d="M3 0v4.500M.8 1.500h4.400v2.700H.8z" fill="#111" /></svg>
        <p className="ml-[14px] text-right text-[11px] leading-[15px]">16:51<br />08.05.2023</p>
        <span className="ml-[11px] flex size-[15px] items-center justify-center rounded-full bg-[#0b69c7] text-[9px] leading-none text-white">3</span>
      </div>
    </footer>
  );
}

export default function App() {
  return (
    <div className="flex h-screen min-h-[480px] flex-col overflow-hidden bg-[#fafafa] font-['Noto_Sans','Open_Sans',sans-serif]">
      <TitleBar />
      <MenuBar />
      <TabBar />
      <Toolbar />
      <Workspace />
      <Taskbar />
    </div>
  );
}
